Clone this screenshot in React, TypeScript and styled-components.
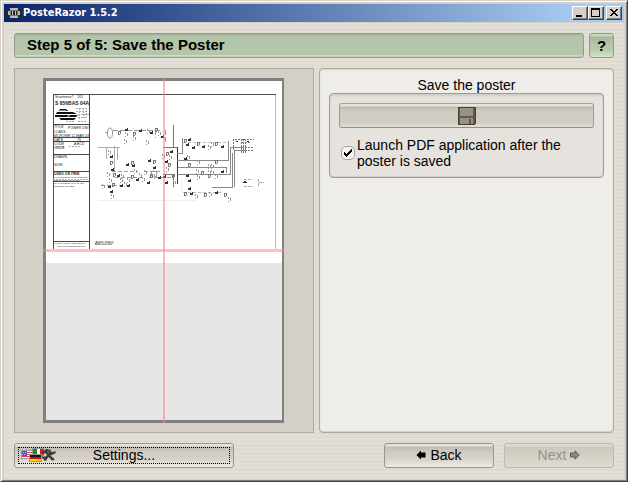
import React from 'react';
import styled, { createGlobalStyle } from 'styled-components';

const GlobalStyle = createGlobalStyle`
  *, *::before, *::after { box-sizing: border-box; }
  body { margin: 0; background: #d4d0c8; }
  button, input { font: inherit; margin: 0; padding: 0; color: inherit; }
`;

const Frame = styled.div`
  display: flex;
  flex-direction: column;
  height: 100vh;
  min-height: 360px;
  padding: 2px;
  background: #d4d0c8;
  border: 1px solid;
  border-color: #d4d0c8 #404040 #404040 #d4d0c8;
  box-shadow: inset 1px 1px 0 #ffffff, inset -1px -1px 0 #808080;
  font-family: 'Liberation Sans', Arial, sans-serif;
  font-size: 14px;
  line-height: 16px;
  color: #000;
`;

const TitleBar = styled.header`
  display: flex;
  align-items: center;
  flex: none;
  height: 18px;
  margin: 1px 1px 0;
  padding: 0 2px;
  background: linear-gradient(90deg, #0a246a, #a6caf0 92%);
`;

const WindowTitle = styled.span`
  flex: 1;
  margin-left: 1px;
  color: #fff;
  font: bold 11px/16px 'DejaVu Sans Condensed', 'Noto Sans', sans-serif;
`;

const CaptionButton = styled.button<{ $apart?: boolean }>`
  display: flex;
  width: 16px;
  height: 14px;
  margin-left: ${(p) => (p.$apart ? 2 : 0)}px;
  border: 1px solid;
  border-color: #fff #404040 #404040 #fff;
  background: #d4d0c8;
  box-shadow: inset -1px -1px 0 #808080;
`;

const Content = styled.main`
  display: flex;
  flex-direction: column;
  flex: 1;
  min-height: 0;
  gap: 10px;
  margin: 1px 1px 0;
  padding: 10px 10px 11px;
  background: repeating-linear-gradient(180deg, #e4e0d8 0 1px, #e1ddd4 1px 2px, #dedad1 2px 3px, #e1ddd4 3px 4px);
`;

const Row = styled.div`
  display: flex;
  flex: none;
  gap: 5px;
`;

const StepHeading = styled.h1`
  flex: 1;
  height: 25px;
  margin: 0;
  padding: 0 12px;
  border: 1px solid #8da082;
  border-radius: 3px;
  background: #b4c6aa;
  box-shadow: inset 0 1px 0 #a1b397, inset 0 2px 0 #adbfa3, inset 0 -1px 0 #c0d2b6, inset 0 -2px 0 #cbdec1;
  font-size: 15px;
  line-height: 22px;
  font-weight: bold;
`;

const HelpButton = styled.button`
  width: 25px;
  height: 25px;
  border: 1px solid #8da082;
  border-radius: 3px;
  background: linear-gradient(180deg, #c6d8bc 0 2px, #a5b79b 3px, #b4c6aa 10px, #b9cbaf 16px, #d2e5c8);
  font-size: 15px;
  font-weight: bold;
`;

const Panels = styled.div`
  display: grid;
  grid-template-columns: minmax(0, 300fr) minmax(0, 295fr);
  gap: 5px;
  flex: 1;
  min-height: 0;
`;

const PreviewPanel = styled.section`
  display: flex;
  min-height: 0;
  padding: 9px 10px 9px 9px;
  border: 1px solid #b0aa9b;
  background: #d4d0c8;
`;

const OptionsPanel = styled.section`
  padding: 8px 9px;
  border: 1px solid #aea899;
  border-radius: 4px;
  background: #eeede9;
  box-shadow: inset 0 1px 1px #d8d4cb, inset 0 -1px 1px #d4d0c6;
`;

const GroupTitle = styled.h2`
  margin: 0;
  text-align: center;
  font-size: 14px;
  line-height: 16px;
  font-weight: normal;
`;

const Group = styled.div`
  display: flex;
  flex-direction: column;
  gap: 9px;
  height: 85px;
  padding: 9px;
  border: 1px solid #a29a8c;
  border-radius: 4px;
  background: #e6e3df;
  box-shadow: inset 0 2px 2px #d1ccc3, inset 0 -1px 1px #d1ccc3;
`;

const Button = styled.button<{ $width?: number }>`
  display: flex;
  align-items: center;
  justify-content: center;
  gap: 4px;
  width: ${(p) => (p.$width ? `${p.$width}px` : '100%')};
  height: 25px;
  padding-bottom: 1px;
  border: 1px solid #9b9484;
  border-radius: 3px;
  background: linear-gradient(180deg, #e6e3dc 0 2px, #c1bbb0 3px, #d0cbc1 8px, #d7d2c9 15px, #eeece8);
  &:disabled {
    border-color: #bdb8ad;
    background: linear-gradient(180deg, #dedad1 0 2px, #cec9bf 3px, #d4d0c6 12px, #dedad1);
    color: #96928b;
  }
`;

const SettingsButton = styled(Button)`
  display: grid;
  grid-template-columns: 36px 1fr 36px;
  padding: 0 5px 1px;
  gap: 0;
  outline: 1px dotted #000;
  outline-offset: -5px;
`;

const SaveButton = styled(Button)`
  flex: none;
  padding-bottom: 0;
  border-color: #aaa394 #a19989 #958d7e #a19989;
  background: linear-gradient(180deg, #e6e3dc 0 2px, #bcb6aa 3px, #cfcabf 6px, #d2cdc2 19px, #e4e0d9);
`;

const CheckLabel = styled.label`
  display: grid;
  grid-template-columns: 14px 1fr;
  column-gap: 2px;
  align-items: center;
  padding-left: 2px;
`;

const CheckBox = styled.span`
  display: grid;
  & > * { grid-area: 1 / 1; }
  & > svg { pointer-events: none; }
`;

const CheckInput = styled.input`
  appearance: none;
  width: 14px;
  height: 14px;
  border: 1px solid #aaa59b;
  border-radius: 5px;
  background: #f5f4f2;
  & + svg { visibility: hidden; }
  &:checked + svg { visibility: visible; }
`;

const Footer = styled(Row)`
  gap: 10px;
`;

const Spacer = styled.span`
  flex: 1;
`;

const Drawing = styled.svg`
  display: block;
  flex: 1;
  width: 100%;
  height: 100%;
  min-width: 0;
`;

const Glyph = styled.svg`
  display: block;
  flex: none;
`;

const AppIcon = () => (
  <Glyph width="16" height="14" viewBox="0 0 16 14" shapeRendering="crispEdges">
    <path d="M3 2h10v2h2v1h1v4h-1v2h-2v1H3v-1H1V9H0V5h1V4h2z" fill="#292929" />
    <path d="M4 2h8v2H4zM4 10h8v2H4zM2 5h12v4H2z" fill="#b9b9b9" />
    <path d="M4 4h8v6H4z" fill="#777" />
    <path d="M5 5h1v4H5zM7 5h2v4H7zM10 5h1v4h-1z" fill="#242424" />
    <path d="M6 5h1v4H6zM9 5h1v4H9z" fill="#c4c4c4" />
  </Glyph>
);

const Disk = () => (
  <Glyph width="18" height="18" viewBox="0 0 18 18" shapeRendering="crispEdges">
    <path d="M0 0h18v17h-1v1H0z" fill="#453f34" />
    <path d="M1 1h16v16H1z" fill="#625b4c" />
    <path d="M2 1h13v8H2zM2 11h13v6H2z" fill="#999184" />
    <path d="M11 12h2v5h-2z" fill="#625b4c" />
  </Glyph>
);

const LanguageTools = () => (
  <Glyph width="36" height="14" viewBox="0 0 36 14" shapeRendering="crispEdges">
    <path d="M1 2h13v9H1z" fill="#999" />
    <path d="M2 3h12v7H2z" fill="#fff" />
    <path d="M2 4h12v1H2zM2 6h12v1H2zM2 8h12v1H2z" fill="#e33b3b" />
    <path d="M2 3h5v5H2z" fill="#4a55d8" />
    <path d="M3 4h1v1H3zM5 4h1v1H5zM4 6h1v1H4zM2 6h1v1H2z" fill="#b8bcff" />
    <path d="M12 0h12v8H12z" fill="#999" />
    <path d="M13 1h4v6h-4z" fill="#128b2c" />
    <path d="M17 1h3v6h-3z" fill="#fff" />
    <path d="M20 1h4v6h-4z" fill="#e51717" />
    <path d="M9 6h13v8H9z" fill="#999" />
    <path d="M10 7h11v2H10z" fill="#111" />
    <path d="M10 9h11v2H10z" fill="#e00d0d" />
    <path d="M10 11h11v2H10z" fill="#ffd900" />
    <g fill="none" stroke="#3c3c3c" shapeRendering="auto">
      <path d="M25 3l8 9M32 4l-8 8" strokeWidth="2.5" />
      <path d="M22.5 5.500l4-3.500 2 1M29.500 1.500v3l2 1.500 4-2" strokeWidth="2" />
      <path d="M22 9.500h3l1 3M32 10l2 2" strokeWidth="2" />
    </g>
  </Glyph>
);

const Arrow = ({ right = false }: { right?: boolean }) => (
  <Glyph width="10" height="10" viewBox="0 0 10 10">
    <path
      d={right ? 'M.5 3H5V.8L9.300 5 5 9.200V7H.5z' : 'M9.500 2.500H5V.5L.5 5 5 9.500v-2h4.500z'}
      fill={right ? '#8d8980' : '#000'}
      stroke={right ? '#5d5b56' : '#000'}
      strokeWidth={right ? 1 : 0}
    />
  </Glyph>
);

/* Component symbols of the circuit: [x, y, kind] */
const parts: [number, number, number][] = [
  [118, 131, 0], [125, 128, 1], [125, 132, 2], [133, 132, 0], [139, 129, 1], [147, 129, 2], [150, 131, 1], [155, 128, 0], [158, 131, 2], [161, 135, 1],
  [108, 150, 2], [110, 155, 1], [110, 161, 0], [111, 168, 1], [107, 172, 2], [113, 173, 0], [117, 174, 1], [121, 174, 2], [126, 163, 1], [131, 161, 0], [132, 164, 1],
  [148, 159, 1], [153, 160, 0], [153, 166, 1], [144, 170, 2], [131, 175, 0], [136, 178, 1], [139, 173, 2], [147, 181, 1], [150, 174, 0], [154, 174, 2], [158, 176, 1],
  [102, 184, 2], [108, 185, 1], [112, 183, 0], [120, 184, 1], [124, 182, 2], [110, 190, 1], [111, 194, 2], [127, 184, 1],
  [124, 139, 2], [133, 136, 2], [146, 140, 2], [120, 178, 2], [127, 178, 2], [142, 177, 2], [109, 178, 2], [134, 169, 2],
  [162, 154, 2], [166, 152, 0], [170, 150, 1], [169, 155, 2], [165, 160, 1], [168, 163, 0], [166, 167, 2], [163, 175, 1], [165, 181, 1], [172, 174, 0], [173, 180, 2],
  [184, 139, 0], [188, 138, 1], [186, 143, 1], [192, 146, 1], [197, 142, 0], [202, 145, 1], [208, 145, 2], [211, 142, 2], [215, 142, 0], [221, 145, 1],
  [184, 157, 1], [187, 155, 2], [188, 163, 0], [197, 160, 2], [208, 164, 2], [211, 164, 2], [215, 160, 0], [196, 169, 2], [201, 171, 0], [208, 170, 2], [211, 170, 2], [221, 170, 1],
  [186, 174, 1], [197, 175, 2], [208, 174, 0], [215, 174, 2], [188, 179, 1], [188, 187, 1], [184, 192, 0], [190, 192, 1], [195, 194, 2], [204, 193, 0], [209, 192, 2], [215, 191, 1], [224, 193, 0], [228, 197, 2],
];

const partPaths = [
  'M0 .5h3M.5 1v2m2-2v2M0 3.500h2',
  'M0 1.500h3M0 2.500h3M2.500 0v2',
  'M.5 0v2m2-1v3M0 4.500h1',
];
const partTones = ['#777', '#333', '#999'];

const Poster = () => (
  <Drawing viewBox="43 78 241 345" role="img" aria-label="Poster preview">
    <path d="M43 78h241v345H43z" fill="#808080" />
    <path d="M46 81h236v182H46z" fill="#fff" />
    <path d="M46 263h236v157H46z" fill="#e6e6e6" />
    <g fill="none" shapeRendering="crispEdges">
      <path d="M53.500 249V94.500H276" stroke="#505050" />
      <path d="M275.500 95v154" stroke="#b9b9b9" />
      <path d="M89.500 94v155M53 124.500h36M53 137.500h36M53 141.500h36M53 154.500h36M53 171.500h36M53 181.500h36M53 241.500h36" stroke="#454545" />
      <path d="M56 146.500h8m5 0h11M53 179.500h35" stroke="#aaa" strokeDasharray="2 1" />
      <path d="M76 108.500h12m-12 3h10m-8 3h11m-11 3h9M79.500 108v12m4-12v10m3-8v7M66 121.500h9m3 0h9" stroke="#aaa" strokeDasharray="2 1" />
    </g>
    <g fill="#111">
      <path d="M60 109h6l2 2h-9zM57 112h16l4 2H56zM55 115h14l-2 2H55zM70 115h8l-2 2h-8zM59 118h17l-2 2H61z" />
      <path d="M60 110h6v1h-6z" fill="#888" />
    </g>
    <g fill="#222" fontFamily="Liberation Sans, sans-serif" fontSize="3.500">
      <text x="55" y="98">Scantronix? &#160; &#160;201</text>
      <text x="55" y="105" fontSize="5" fontWeight="bold">S 856BAS 04A</text>
      <text x="54" y="128">TITLE</text>
      <text x="68" y="129">POWER UNIT</text>
      <text x="54" y="133">CLASS</text>
      <text x="54" y="137">MCROWE 12-MAR-03</text>
      <text x="54" y="141">DATE</text>
      <text x="77" y="141">75</text>
      <text x="54" y="145">CODE</text>
      <text x="74" y="145">A BCD</text>
      <text x="54" y="149">ISSUE</text>
      <text x="54" y="158">DRAWN</text>
      <text x="54" y="166">SIGN</text>
      <text x="54" y="175" fontWeight="bold">USED ON ITEM</text>
      <text x="54" y="178" fontSize="2">ALL DIMENSIONS IN MILLIMETRES</text>
      <text x="54" y="181" fontSize="2.500">RESISTORS IN OHMS</text>
      <text x="54" y="184" fontSize="2.500">CAPACITORS IN FARADS</text>
      <text x="54" y="187" fontSize="2.500">UNLESS STATED</text>
      <text x="54" y="244" fontSize="2">THIS DRAWING IS CONFIDENTIAL</text>
      <text x="57" y="247" fontSize="2">COPYRIGHT RESERVED 2003</text>
      <text x="95" y="243.500" fontStyle="italic">AMPLIFIER</text>
    </g>
    <g fill="none" stroke="#777" shapeRendering="crispEdges">
      <path d="M98 147.500h22M106.500 147v12M114.500 146v25M117.500 147v13M95 244.500h17" stroke="#aaa" />
      <path d="M105 132.500h3M113 130.500h48M155.500 130v8M165.500 130v12" strokeDasharray="5 2" stroke="#999" />
      <path d="M112 171.500h26m6 0h18M115 177.500h30m4 0h22M101 185.500h22" strokeDasharray="4 2" stroke="#999" />
      <path d="M173.500 125v22M163 147.500h14M163 174.500h12M173.500 174v13" />
      <path d="M177.500 147v37" stroke="#333" />
      <path d="M177 153.500h5V138M177 160.500h51V141M178 167.500h48v5M177 174.500h53V147.500h14M212 187.500h20V153M234.500 187V150.500h10" stroke="#888" />
      <path d="M183 142.500h44M183 192.500h38" stroke="#bbb" strokeDasharray="3 2" />
      <path d="M181.500 179v12M182 195.500h14M98 200.500h65M165 200.500h31" stroke="#eee" />
      <path d="M233.500 150v-11h20M241.500 139v14m2-14v14m2-14v14M242 142.500h8M242 147.500h12M242 150.500h11" strokeDasharray="2 1" stroke="#777" />
      <path d="M244 179.500h8m-8 7h9M258.500 179v7M259 182.500h5" stroke="#aaa" strokeDasharray="3 1" />
      <path d="M243 182.500h4m-3-1h2M236 141.500h2m9 0h2" stroke="#333" />
    </g>
    <ellipse cx="110" cy="133" rx="2.500" ry="5" fill="none" stroke="#999" />
    <ellipse cx="154" cy="174" rx="3" ry="3" fill="none" stroke="#999" />
    <g fill="none">
      {parts.map(([x, y, kind], i) => (
        <path key={i} d={partPaths[kind]} transform={`translate(${x} ${y})`} stroke={partTones[kind]} />
      ))}
    </g>
    <path d="M163 78h2v345h-2z" fill="#ff8080" fillOpacity=".55" />
    <path d="M43 249h241v3H43z" fill="#ff8080" fillOpacity=".5" />
  </Drawing>
);

export default function App() {
  return (
    <>
      <GlobalStyle />
      <Frame>
        <TitleBar>
          <AppIcon />
          <WindowTitle>PosteRazor 1.5.2</WindowTitle>
          <CaptionButton aria-label="Minimize">
            <Glyph width="14" height="12" viewBox="0 0 14 12"><path d="M3 8h6v2H3z" /></Glyph>
          </CaptionButton>
          <CaptionButton aria-label="Maximize">
            <Glyph width="14" height="12" viewBox="0 0 14 12"><path d="M2 1h9v9H2zM3 3v6h7V3z" fillRule="evenodd" /></Glyph>
          </CaptionButton>
          <CaptionButton aria-label="Close" $apart>
            <Glyph width="14" height="12" viewBox="0 0 14 12" shapeRendering="crispEdges">
              <path d="M3 2h2v1h1v1h2V3h1V2h2v1h-1v1H9v1H8v1h1v1h1v1h1v1H9V8H8V7H6v1H5v1H3V8h1V7h1V6h1V5H5V4H4V3H3z" />
            </Glyph>
          </CaptionButton>
        </TitleBar>
        <Content>
          <Row>
            <StepHeading>Step 5 of 5: Save the Poster</StepHeading>
            <HelpButton aria-label="Help">?</HelpButton>
          </Row>
          <Panels>
            <PreviewPanel><Poster /></PreviewPanel>
            <OptionsPanel>
              <GroupTitle>Save the poster</GroupTitle>
              <Group>
                <SaveButton aria-label="Save the poster"><Disk /></SaveButton>
                <CheckLabel>
                  <CheckBox>
                    <CheckInput type="checkbox" defaultChecked />
                    <Glyph width="14" height="14" viewBox="0 0 14 14" shapeRendering="crispEdges">
                      <path d="M3 6h1v1h1v1h1V7h1V6h1V5h1V4h1V3h1v3h-1v1H9v1H8v1H7v1H6v1H5v-1H4V9H3z" />
                    </Glyph>
                  </CheckBox>
                  <span>Launch PDF application after the poster is saved</span>
                </CheckLabel>
              </Group>
            </OptionsPanel>
          </Panels>
          <Footer>
            <SettingsButton $width={220}><LanguageTools /><span>Settings...</span></SettingsButton>
            <Spacer />
            <Button $width={110}><Arrow />Back</Button>
            <Button $width={110} disabled>Next <Arrow right /></Button>
          </Footer>
        </Content>
      </Frame>
    </>
  );
}
